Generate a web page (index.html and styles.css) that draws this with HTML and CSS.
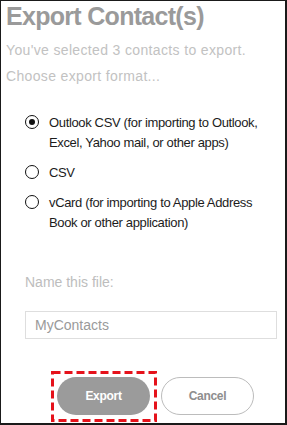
FILE: index.html
```html
<!DOCTYPE html>
<html lang="en">
<head>
  <meta charset="UTF-8" />
  <meta name="viewport" content="width=device-width, initial-scale=1.0"/>
  <title>Export Contact(s)</title>
  <link rel="stylesheet" href="styles.css">
</head>
<body>

  <div class="dialog">
    <h1 class="title">Export Contact(s)</h1>
    <p class="intro">You've selected 3 contacts to export.</p>
    <p class="intro">Choose export format...</p>

    <div class="options">
      <label class="option">
        <span class="radio checked"></span>
        <span class="option-text">Outlook CSV (for importing to Outlook, Excel, Yahoo mail, or other apps)</span>
      </label>
      <label class="option">
        <span class="radio"></span>
        <span class="option-text">CSV</span>
      </label>
      <label class="option">
        <span class="radio"></span>
        <span class="option-text">vCard (for importing to Apple Address Book or other application)</span>
      </label>
    </div>

    <div class="file-name">
      <div class="file-label">Name this file:</div>
      <input type="text" class="file-input" value="MyContacts" />
    </div>

    <div class="actions">
      <div class="highlight">
        <button class="btn btn-primary">Export</button>
        <svg class="dashes" width="106" height="51" viewBox="0 0 106 51">
          <rect x="1.5" y="1.5" width="103" height="48" fill="none" stroke="#e5121b" stroke-width="3" stroke-dasharray="8 4"/>
        </svg>
      </div>
      <button class="btn btn-secondary">Cancel</button>
    </div>
  </div>

</body>
</html>
```

FILE: styles.css
```css
body {
  margin: 0;
  background: #fff;
  font-family: 'Liberation Sans', Arial, sans-serif;
}

.dialog {
  box-sizing: border-box;
  width: 287px;
  height: 425px;
  border: 1px solid #1a1a1a;
  border-right-width: 2px;
  border-bottom-width: 2px;
  padding-left: 5px;
  overflow: hidden;
}

.title {
  margin: 0;
  font-size: 25px;
  line-height: 30px;
  font-weight: bold;
  letter-spacing: -0.7px;
  color: #9a9a9a;
}

.intro {
  margin: 0;
  font-size: 14px;
  line-height: 26px;
  letter-spacing: 0.35px;
  color: #c2c2c2;
}

.title + .intro {
  margin-top: 6px;
}

.options {
  margin: 24px 0 0 19px;
  display: flex;
  flex-direction: column;
  gap: 10px;
}

.option {
  display: flex;
  align-items: flex-start;
  gap: 10px;
}

.radio {
  flex: none;
  box-sizing: border-box;
  width: 14px;
  height: 14px;
  margin-top: 2px;
  border: 1.5px solid #111;
  border-radius: 50%;
  display: flex;
  justify-content: center;
  align-items: center;
}

.radio.checked::after {
  content: "";
  width: 6px;
  height: 6px;
  border-radius: 50%;
  background: #111;
}

.option-text {
  width: 215px;
  font-size: 13px;
  line-height: 20px;
  letter-spacing: -0.35px;
  color: #1c1c1c;
}

.file-name {
  margin: 39px 0 0 19px;
}

.file-label {
  font-size: 14px;
  line-height: 20px;
  color: #bdbdbd;
}

.file-input {
  box-sizing: border-box;
  display: block;
  width: 252px;
  height: 28px;
  margin-top: 19px;
  padding: 0 9px;
  border: 1px solid #dedede;
  font-family: inherit;
  font-size: 14px;
  color: #9a9a9a;
  outline: none;
}

.actions {
  display: flex;
  gap: 11px;
  margin: 38px 0 0 51px;
}

.highlight {
  position: relative;
}

.dashes {
  position: absolute;
  left: -6px;
  top: -6px;
}

.btn {
  box-sizing: border-box;
  width: 93px;
  height: 38px;
  border-radius: 19px;
  font-family: inherit;
  font-size: 12px;
  font-weight: bold;
  letter-spacing: -0.3px;
  cursor: pointer;
}

.btn-primary {
  background: #9b9b9b;
  color: #fff;
  border: none;
}

.btn-secondary {
  background: #fff;
  color: #8e8e8e;
  border: 1px solid #bcbcbc;
}
```
